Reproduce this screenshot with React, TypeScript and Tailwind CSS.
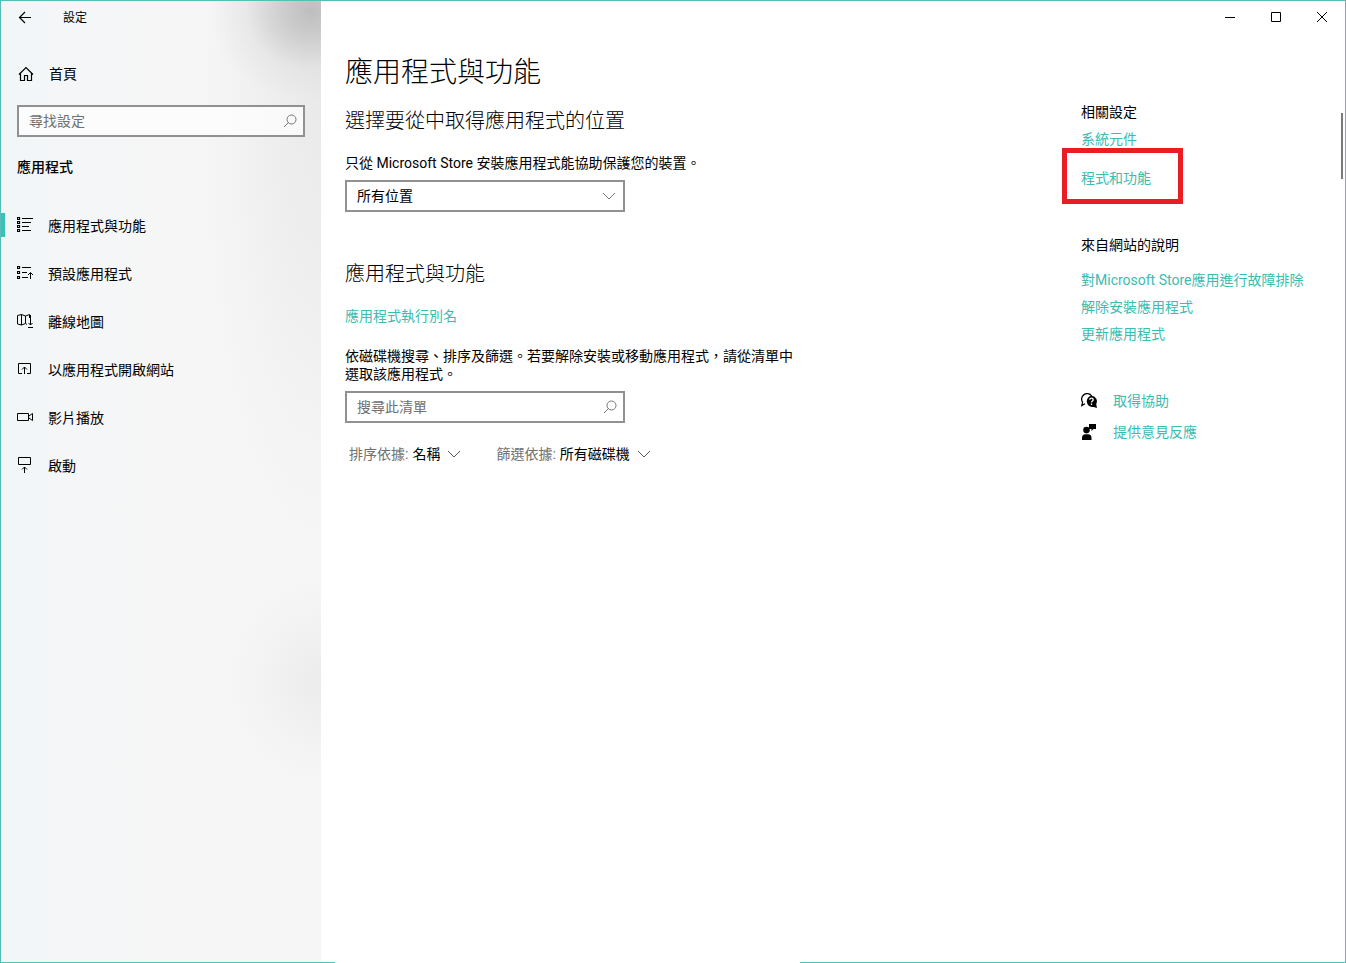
import React, { FC, ReactNode } from "react";
import clsx from "clsx";

interface IIcon {
  children: ReactNode;
  className?: string;
  size?: number;
}

interface INavItem {
  label: string;
  icon: ReactNode;
}

const Icon: FC<IIcon> = ({ children, className, size = 16 }) => (
  <svg
    width={size}
    height={size}
    viewBox={`0 0 ${size} ${size}`}
    fill="none"
    stroke="currentColor"
    strokeWidth="1"
    className={clsx("shrink-0", className)}
    aria-hidden="true"
  >
    {children}
  </svg>
);

const BackIcon = () => (
  <Icon>
    <path d="M14 7.5H2.5M8 2L2.5 7.5L8 13" strokeWidth="1.2" />
  </Icon>
);

const HomeIcon = () => (
  <Icon>
    <path
      d="M1 8.5L8 1.5L15 8.5M2.5 7.5V14.5H6.5V9.5H9.5V14.5H13.5V7.5"
      strokeWidth="1.2"
    />
  </Icon>
);

const SearchIcon = () => (
  <Icon size={14} className="text-[#777777]">
    <circle cx="8.5" cy="5.5" r="4.5" />
    <path d="M5.5 8.5L1 13" />
  </Icon>
);

const ChevronIcon: FC<{ className?: string }> = ({ className }) => (
  <svg
    width="14"
    height="8"
    viewBox="0 0 14 8"
    fill="none"
    stroke="currentColor"
    className={clsx("pointer-events-none shrink-0", className)}
    aria-hidden="true"
  >
    <path d="M1 1L7 7L13 1" />
  </svg>
);

const AppsIcon = () => (
  <Icon>
    <path
      d="M.5 .5h2v2h-2zM.5 4.5h2v2h-2zM.5 8.5h2v2h-2zM.5 12.5h2v2h-2z"
      strokeWidth="1.2"
    />
    <path d="M5 1.5H16M5 5.5H14M5 9.5H12M5 13.5H14" />
  </Icon>
);

const DefaultsIcon = () => (
  <Icon>
    <path
      d="M.5 1.5h2v2h-2zM.5 6.5h2v2h-2zM.5 11.5h2v2h-2z"
      strokeWidth="1.2"
    />
    <path d="M5 2.5H14M5 7.5H10M5 12.5H11M13.5 14V8M11 10L13.5 7.5L16 10" />
  </Icon>
);

const MapIcon = () => (
  <Icon>
    <path d="M10 11.5L8.5 10.5L4.5 12L.5 11V2.5L4.5 1.5L8.5 3L12.5 1.5V5M4.5 1.5V12M8.5 3V10.5" />
    <path d="M13.5 2V12M11.5 10L13.5 12L15.5 10M11 14.5H16" />
  </Icon>
);

const WebsiteIcon = () => (
  <Icon>
    <path d="M5 12.5H1.5V2.5H13.5V12.5H10M7.5 13V6M5 8.5L7.5 6L10 8.5" />
  </Icon>
);

const VideoIcon = () => (
  <Icon>
    <path d="M.5 4.5H11.5V11.5H.5ZM12 7L15.5 4.5V11.5L12 9" />
  </Icon>
);

const StartupIcon = () => (
  <Icon>
    <path d="M1.5 .5H13.5V7.5H1.5ZM7.5 16V10M5 12.5L7.5 10L10 12.5" />
  </Icon>
);

const HelpIcon = () => (
  <Icon>
    <path
      d="M4 10.8L.8 12.6L1.6 9.2A5.2 5.2 0 1 1 10.6 3"
      strokeWidth="1.3"
    />
    <path
      d="M10.3 2.8a5.5 5.5 0 0 1 4.9 8.2l.8 4-3.4-1.1A5.5 5.5 0 1 1 10.3 2.8z"
      fill="currentColor"
      stroke="none"
    />
    <path
      d="M8.8 6.8c0-2.2 3.4-2.2 3.4 0 0 1.2-1.7 1.2-1.7 2.6M10.5 10.6v1.4"
      stroke="#fff"
      strokeWidth="1.3"
    />
  </Icon>
);

const FeedbackIcon = () => (
  <Icon className="text-black">
    <path
      d="M8 0H15V5H12.5L10.5 7V5H8ZM5.5 2.8a3.3 3.3 0 1 1 0 6.6a3.3 3.3 0 0 1 0-6.6zM1 16V14Q1 10.3 4.5 10.3H7Q10.5 10.3 10.5 14V16Z"
      fill="currentColor"
      stroke="none"
    />
  </Icon>
);

const navItems: INavItem[] = [
  { label: "應用程式與功能", icon: <AppsIcon /> },
  { label: "預設應用程式", icon: <DefaultsIcon /> },
  { label: "離線地圖", icon: <MapIcon /> },
  { label: "以應用程式開啟網站", icon: <WebsiteIcon /> },
  { label: "影片播放", icon: <VideoIcon /> },
  { label: "啟動", icon: <StartupIcon /> },
];

const helpLinks = [
  "對Microsoft Store應用進行故障排除",
  "解除安裝應用程式",
  "更新應用程式",
];

const SearchBox: FC<{ label: string; className?: string }> = ({
  label,
  className,
}) => (
  <div
    className={clsx(
      "flex h-8 items-center border-2 border-[#919191] bg-white/70 pr-[6px] pb-px pl-[10px]",
      className
    )}
  >
    <input
      type="text"
      aria-label={label}
      placeholder={label}
      className="min-w-0 flex-1 bg-transparent leading-[18px] outline-none placeholder:text-[#707070]"
    />
    <button aria-label="搜尋">
      <SearchIcon />
    </button>
  </div>
);

const InlineSelect: FC<{ id: string; label: string; value: string }> = ({
  id,
  label,
  value,
}) => (
  <div className="flex items-center">
    <label htmlFor={id} className="mr-1 text-[#6f6f6f]">
      {label}
    </label>
    <div className="relative flex items-center">
      <select
        id={id}
        className="appearance-none bg-transparent pr-5 leading-[18px]"
      >
        <option>{value}</option>
      </select>
      <ChevronIcon className="absolute -right-px text-[#555555]" />
    </div>
  </div>
);

const Sidebar = () => (
  <aside className="flex w-80 shrink-0 flex-col border-b border-[#58bdb6] bg-[radial-gradient(ellipse_100px_90px_at_310px_10px,#bebebe,#c4c4c4c0_30%,#dadada60_65%,transparent),radial-gradient(ellipse_120px_460px_at_320px_80px,#e9e9e9,transparent),radial-gradient(ellipse_90px_100px_at_320px_680px,#ececec,transparent),linear-gradient(to_right,#f1f6f7,#f4f6f8_15%,#f6f6f6_50%)]">
    <div className="flex h-[33px] items-center pl-4">
      <button aria-label="上一頁">
        <BackIcon />
      </button>
      <span className="ml-[30px] text-xs">設定</span>
    </div>
    <button className="mt-5 flex h-10 items-center gap-[15px] pl-[17px]">
      <HomeIcon />
      首頁
    </button>
    <SearchBox label="尋找設定" className="mx-4 mt-[11px]" />
    <h2 className="mt-5 pl-4 leading-5 font-medium">應用程式</h2>
    <nav className="mt-6">
      {navItems.map((item, index) => (
        <a
          key={item.label}
          href="#"
          className="flex h-12 items-center"
          aria-current={index === 0 ? "page" : undefined}
        >
          <span
            className={clsx("mr-3 h-6 w-1", index === 0 && "bg-[#38c1b4]")}
          />
          {item.icon}
          <span className="ml-[15px] pt-[2px]">{item.label}</span>
        </a>
      ))}
    </nav>
  </aside>
);

const WindowControls = () => (
  <div className="flex h-8 justify-end">
    <button aria-label="最小化" className="grid w-[46px] place-items-center">
      <Icon size={10}>
        <path d="M0 5.5H10" />
      </Icon>
    </button>
    <button aria-label="最大化" className="grid w-[46px] place-items-center">
      <Icon size={10}>
        <path d="M.5 .5H9.5V9.5H.5Z" />
      </Icon>
    </button>
    <button aria-label="關閉" className="grid w-[46px] place-items-center">
      <Icon size={10}>
        <path d="M0 0L10 10M10 0L0 10" />
      </Icon>
    </button>
  </div>
);

const AppsAndFeatures = () => (
  <section className="w-[450px] pt-[22px]">
    <h1 className="text-[28px] leading-9 font-light">應用程式與功能</h1>
    <h2 className="mt-4 text-xl leading-7 font-light">
      選擇要從中取得應用程式的位置
    </h2>
    <label htmlFor="source" className="mt-[19px] block">
      只從 Microsoft Store 安裝應用程式能協助保護您的裝置。
    </label>
    <div className="relative mt-2 flex w-[280px] items-center">
      <select
        id="source"
        className="h-8 w-full appearance-none border-2 border-[#919191] bg-white px-[10px]"
      >
        <option>所有位置</option>
      </select>
      <ChevronIcon className="absolute right-[9px] text-[#777777]" />
    </div>

    <h2 className="mt-12 text-xl leading-7 font-light">應用程式與功能</h2>
    <a href="#" className="mt-[19px] block text-[#3abcb1]">
      應用程式執行別名
    </a>
    <p className="mt-[22px]">
      依磁碟機搜尋、排序及篩選。若要解除安裝或移動應用程式，請從清單中選取該應用程式。
    </p>
    <SearchBox label="搜尋此清單" className="mt-2 w-[280px]" />
    <div className="mt-[22px] ml-1 flex gap-9">
      <InlineSelect id="sort" label="排序依據:" value="名稱" />
      <InlineSelect id="filter" label="篩選依據:" value="所有磁碟機" />
    </div>
  </section>
);

const RelatedSettings = () => (
  <section className="flex w-[264px] shrink-0 flex-col items-start pt-[70px] text-[#3abcb1]">
    <h3 className="text-black">相關設定</h3>
    <a href="#" className="mt-[9px]">
      系統元件
    </a>
    <a href="#" className="relative mt-[21px]">
      程式和功能
      <span className="absolute -top-[21px] -left-[19px] h-14 w-[121px] border-5 border-[#ea1c24]" />
    </a>
    <h3 className="mt-[49px] mb-2 text-black">來自網站的說明</h3>
    {helpLinks.map((link) => (
      <a key={link} href="#" className="mt-[9px] whitespace-nowrap">
        {link}
      </a>
    ))}
    <a href="#" className="mt-[49px] flex items-center gap-4">
      <span className="text-black">
        <HelpIcon />
      </span>
      取得協助
    </a>
    <a href="#" className="mt-[13px] flex items-center gap-4">
      <FeedbackIcon />
      提供意見反應
    </a>
  </section>
);

const App = () => {
  return (
    <div
      lang="zh-Hant"
      className="flex min-h-screen border-x border-t border-[#58bdb6] bg-white font-['Roboto','Noto_Sans_CJK_TC',sans-serif] text-sm leading-[18px] text-black"
    >
      <Sidebar />
      <main className="relative flex min-w-0 flex-1 flex-col">
        <WindowControls />
        <div className="flex flex-1 justify-between pl-6">
          <AppsAndFeatures />
          <RelatedSettings />
        </div>
        <div className="flex h-px">
          <span className="w-[14px] bg-[#58bdb6]" />
          <span className="w-[465px]" />
          <span className="flex-1 bg-[#58bdb6]" />
        </div>
        <div className="absolute top-28 right-[2px] h-[66px] w-[2px] bg-[#7a7a7a]" />
      </main>
    </div>
  );
};

export default App;
